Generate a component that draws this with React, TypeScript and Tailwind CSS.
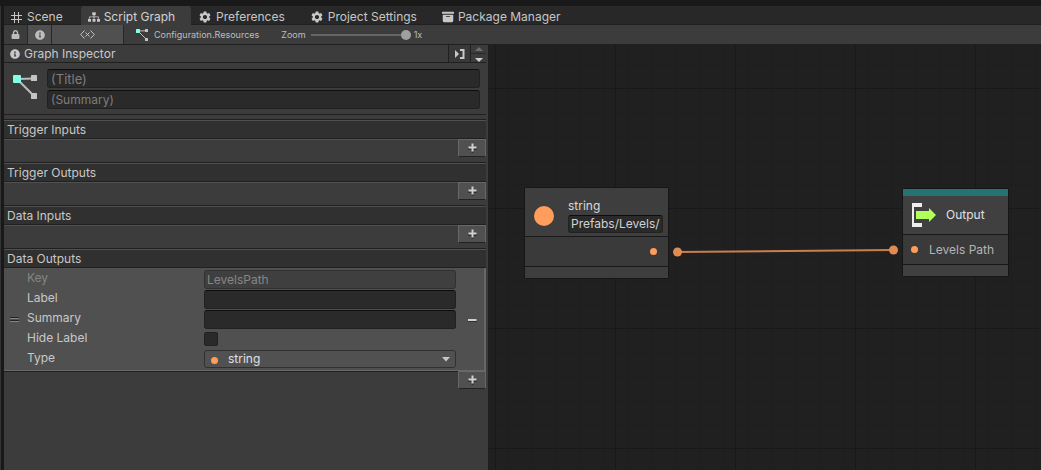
import { useState } from "react";
import type { ReactNode } from "react";
import { BsArchiveFill } from "react-icons/bs";
import { FaInfoCircle, FaLock, FaSitemap } from "react-icons/fa";
import { MdSettings } from "react-icons/md";

const fieldClass =
  "block h-[19px] w-full min-w-0 rounded-[3px] border border-[#212121] border-t-[#0d0d0d] bg-[#2a2a2a] px-[3px] text-[12px] leading-4 text-[#d2d2d2] outline-none placeholder:text-[#7d7d7d]";

function HashIcon() {
  return (
    <svg width="12" height="11" viewBox="0 0 12 11" stroke="#c8c8c8" fill="none" aria-hidden="true">
      <path d="M3.5 0V11M7.5 0V11M0 3.5H11M0 7.5H11" />
    </svg>
  );
}

function GraphIcon({ size }: { size: number }) {
  return (
    <svg width={size} height={size} viewBox="0 0 24 24" aria-hidden="true">
      <path d="M4 4L21 3.500M4 4L21 21" stroke="#bdbdbd" strokeWidth="2" />
      <rect x="0" y="0" width="8" height="8" rx="1" fill="#7fffe6" />
      <rect x="18" y="0" width="6" height="6" rx="0.500" fill="#c4c4c4" />
      <rect x="18" y="18" width="6" height="6" rx="0.500" fill="#c4c4c4" />
    </svg>
  );
}

function VariablesIcon() {
  return (
    <svg width="15" height="9" viewBox="0 0 15 9" fill="none" stroke="#c4c4c4" aria-hidden="true">
      <path d="M4.500 0.500L0.700 4.500L4.500 8.500M10.500 0.500L14.300 4.500L10.500 8.500M5.500 2.500L9.500 6.500M9.500 2.500L5.500 6.500" />
    </svg>
  );
}

function DockIcon() {
  return (
    <svg width="10" height="10" viewBox="0 0 10 10" aria-hidden="true">
      <path d="M0 1L4 5L0 9Z" fill="#c8c8c8" />
      <path d="M5 1H8.500V9H5" fill="none" stroke="#c8c8c8" strokeWidth="2" />
    </svg>
  );
}

function PlusIcon() {
  return (
    <svg width="9" height="10" viewBox="0 0 9 10" fill="none" strokeWidth="2" aria-hidden="true">
      <path d="M4.500 2V10M0 6H9" stroke="#303030" />
      <path d="M4.500 0.500V8.500M0.500 4.500H8.500" stroke="#d0d0d0" />
    </svg>
  );
}

function OutputIcon() {
  return (
    <svg width="24" height="24" viewBox="0 0 24 24" aria-hidden="true">
      <path d="M10 0H0V24H10V20H2V4H10Z" fill="#eeeeee" />
      <path d="M4 8H17V5L24 12L17 19V16H4Z" fill="#b2ff59" />
    </svg>
  );
}

function Tab({ icon, label, active = false }: { icon: ReactNode; label: string; active?: boolean }) {
  return (
    <button
      type="button"
      role="tab"
      aria-selected={active}
      className={
        active
          ? "flex items-center gap-1 rounded-t-[3px] bg-[#3c3c3c] pt-[3px] pr-4 pl-[7px] text-[#d2d2d2]"
          : "flex items-center gap-1 border-b border-[#202020] pt-1 pr-[18px] pl-[7px] text-[#c6c6c6]"
      }
    >
      {icon}
      <span className="whitespace-nowrap">{label}</span>
    </button>
  );
}

function AddButton({ label }: { label: string }) {
  return (
    <button
      type="button"
      aria-label={label}
      className="flex h-[18px] w-7 items-center justify-center border border-[#686868] border-b-[#222] bg-[#505050]"
    >
      <PlusIcon />
    </button>
  );
}

function Section({ title, children }: { title: string; children?: ReactNode }) {
  return (
    <section className="group">
      <h2 className="h-[19px] border-t border-b border-t-[#505050] border-b-[#202020] bg-[#303030] px-[3px] leading-[17px]">
        {title}
      </h2>
      {children}
      <div className="flex h-6 items-start justify-end border-b border-[#202020] group-last:border-transparent">
        <div className={children ? "h-px flex-1 bg-[#202020]" : "h-px flex-1 bg-[#505050]"} />
        <AddButton label={`Add to ${title}`} />
      </div>
    </section>
  );
}

function Row({ id, label, dim = false, children }: { id: string; label: string; dim?: boolean; children: ReactNode }) {
  return (
    <div className="flex h-5 items-start">
      <label htmlFor={id} className={dim ? "w-[177px] shrink-0 leading-4 text-[#868686]" : "w-[177px] shrink-0 leading-4"}>
        {label}
      </label>
      <div className="min-w-0 flex-1">{children}</div>
    </div>
  );
}

function Inspector() {
  const [hidden, setHidden] = useState(false);
  return (
    <aside className="flex w-[484px] shrink-0 flex-col border-r-2 border-[#3c3c3c] bg-[#3c3c3c] text-[#c8c8c8]">
      <header className="flex h-[18px] border-b border-[#202020]">
        <h1 className="flex flex-1 items-center gap-1 border-r border-[#202020] pl-1.5">
          <FaInfoCircle size={10} />
          Graph Inspector
        </h1>
        <button type="button" aria-label="Dock panel" className="flex w-[21px] items-center justify-center bg-[#383838]">
          <DockIcon />
        </button>
        <div className="flex w-4 flex-col border-l border-[#202020]">
          <button type="button" aria-label="Move up" className="flex flex-1 items-center justify-center border-b border-[#282828]">
            <svg width="8" height="4" viewBox="0 0 8 4" aria-hidden="true">
              <path d="M0 4L4 0L8 4Z" fill="#6e6e6e" />
            </svg>
          </button>
          <button type="button" aria-label="Move down" className="flex flex-1 items-end justify-center">
            <svg width="8" height="4" viewBox="0 0 8 4" aria-hidden="true">
              <path d="M0 0L4 4L8 0Z" fill="#d0d0d0" />
            </svg>
          </button>
        </div>
      </header>

      <div className="flex gap-2.5 border-b border-[#202020] pt-1.5 pr-[6px] pb-[5px] pl-[9px]">
        <div className="pt-1.5">
          <GraphIcon size={24} />
        </div>
        <div className="flex min-w-0 flex-1 flex-col gap-0.5">
          <input aria-label="Title" placeholder="(Title)" className={`${fieldClass} text-[13px]`} />
          <input aria-label="Summary" placeholder="(Summary)" className={fieldClass} />
        </div>
      </div>
      <div className="h-[5px] border-b border-[#202020]" />

      <Section title="Trigger Inputs" />
      <Section title="Trigger Outputs" />
      <Section title="Data Inputs" />
      <Section title="Data Outputs">
        <div className="flex border-r-2 border-b border-[#686868] bg-[#505050] pt-0.5">
          <div className="flex w-[23px] items-center pl-1.5">
            <svg width="9" height="6" viewBox="0 0 9 6" aria-hidden="true">
              <path d="M0 0.500H9M0 3.500H9" stroke="#222" />
              <path d="M0 1.500H9M0 4.500H9" stroke="#858585" />
            </svg>
          </div>
          <div className="min-w-0 flex-1">
            <Row id="key" label="Key" dim>
              <input
                id="key"
                disabled
                defaultValue="LevelsPath"
                className="block h-[19px] w-full rounded-[3px] border border-[#303030] bg-[#3f3f3f] px-0.5 text-[12px] leading-4 text-[#868686]"
              />
            </Row>
            <Row id="label" label="Label">
              <input id="label" className={fieldClass} />
            </Row>
            <Row id="summary" label="Summary">
              <input id="summary" className={fieldClass} />
            </Row>
            <Row id="hide" label="Hide Label">
              <input
                id="hide"
                type="checkbox"
                checked={hidden}
                onChange={(e) => setHidden(e.target.checked)}
                className="mt-0.5 block size-3.5 appearance-none rounded-[2px] border border-[#212121] bg-[#2a2a2a] checked:bg-[#c8c8c8]"
              />
            </Row>
            <Row id="type" label="Type">
              <div className="relative">
                <select
                  id="type"
                  className="block h-[18px] w-full appearance-none rounded-[3px] border border-[#303030] bg-[#515151] pl-[23px] text-[12px] leading-4 text-[#e0e0e0]"
                >
                  <option>string</option>
                </select>
                <span className="pointer-events-none absolute top-[7px] left-[7px] size-[7px] rounded-full bg-[#ff9d5c]" />
                <svg className="pointer-events-none absolute top-[7px] right-[6px]" width="8" height="5" viewBox="0 0 8 5" aria-hidden="true">
                  <path d="M0 0L4 4.500L8 0Z" fill="#c8c8c8" />
                </svg>
              </div>
            </Row>
          </div>
          <button type="button" aria-label="Remove item" className="flex w-7 items-center justify-center pl-1">
            <svg width="9" height="3" viewBox="0 0 9 3" aria-hidden="true">
              <path d="M0 1H8.500" stroke="#d0d0d0" strokeWidth="2" />
              <path d="M0 2.500H9" stroke="#303030" />
            </svg>
          </button>
        </div>
      </Section>
    </aside>
  );
}

function Canvas() {
  return (
    <main className="relative min-w-0 flex-1 overflow-hidden bg-[#202020]">
      <svg className="absolute inset-0 size-full" aria-hidden="true">
        <defs>
          <pattern id="minor" width="24" height="24" x="19" y="19" patternUnits="userSpaceOnUse">
            <path d="M0.500 0V24M0 0.500H24" stroke="#1e1e1e" fill="none" />
          </pattern>
          <pattern id="major" width="120" height="120" x="7" y="43" patternUnits="userSpaceOnUse">
            <path d="M0.500 0V120M0 0.500H120" stroke="#191919" fill="none" />
          </pattern>
        </defs>
        <rect width="100%" height="100%" fill="url(#minor)" />
        <rect width="100%" height="100%" fill="url(#major)" />
        <path d="M189 207L405 205" stroke="#c87f4c" strokeWidth="2" />
        <circle cx="189.500" cy="207" r="4.500" fill="#e08b52" />
        <circle cx="405.500" cy="205" r="4.500" fill="#e08b52" />
      </svg>

      <article className="absolute top-[142px] left-9 w-[145px] rounded-[2px] border border-[#161616] bg-[#3a3a3a]">
        <div className="flex h-[49px] items-center gap-3.5 border-b border-[#191919] bg-[#3e3e3e] pr-[5px] pl-[9px]">
          <span className="mt-2 size-5 shrink-0 rounded-full bg-[#ff9d5c]" />
          <div className="flex min-w-0 flex-1 flex-col gap-px pt-1.5">
            <label htmlFor="literal" className="leading-4 text-[#d8d8d8]">
              string
            </label>
            <input
              id="literal"
              defaultValue="Prefabs/Levels/"
              className="block h-[18px] w-full rounded-[3px] border border-[#222] border-t-[#0d0d0d] bg-[#2a2a2a] px-0.5 text-[12px] leading-4 text-[#d2d2d2]"
            />
          </div>
        </div>
        <div className="flex h-[30px] items-center justify-end border-b border-[#191919] pr-[11px]">
          <span className="size-[7px] rounded-full bg-[#ff9d5c]" />
        </div>
        <div className="h-[11px] bg-[#3e3e3e]" />
      </article>

      <article className="absolute top-[143px] left-[414px] w-[107px] rounded-[2px] border border-[#161616] bg-[#3a3a3a]">
        <div className="h-[7px] bg-[#267373]" />
        <div className="flex h-[39px] items-center gap-2.5 border-b border-[#191919] bg-[#404040] pl-[9px]">
          <OutputIcon />
          <h2 className="text-[#e0e0e0]">Output</h2>
        </div>
        <div className="flex h-[30px] items-center gap-[11px] border-b border-[#191919] pl-2">
          <span className="size-[7px] rounded-full bg-[#ff9d5c]" />
          <span className="whitespace-nowrap text-[#b4b4b4]">Levels Path</span>
        </div>
        <div className="h-[11px] bg-[#404040]" />
      </article>
    </main>
  );
}

export default function App() {
  return (
    <div className="flex min-h-screen flex-col bg-[#191919] pt-1.5 font-['Inter',sans-serif] text-[12px] leading-4">
      <div className="flex flex-1 flex-col border-l border-[#333]">
        <div className="flex flex-1 flex-col border-l-3 border-[#191919]">
          <nav role="tablist" className="flex h-[19px] bg-[#282828]">
            <Tab icon={<HashIcon />} label="Scene" />
            <Tab icon={<FaSitemap size={12} color="#c8c8c8" />} label="Script Graph" active />
            <Tab icon={<MdSettings size={14} color="#c8c8c8" />} label="Preferences" />
            <Tab icon={<MdSettings size={14} color="#c8c8c8" />} label="Project Settings" />
            <Tab icon={<BsArchiveFill size={12} color="#c8c8c8" />} label="Package Manager" />
            <div className="flex-1 border-b border-[#202020]" />
          </nav>

          <div className="flex h-5 items-stretch border-b border-[#202020] bg-[#3c3c3c] text-[9px] text-[#bdbdbd]">
            <button type="button" aria-label="Lock" className="flex w-6 items-center justify-center border-r border-[#282828]">
              <FaLock size={9} />
            </button>
            <button type="button" aria-label="Graph inspector" className="flex w-6 items-center justify-center border-r border-[#282828] bg-[#505050]">
              <FaInfoCircle size={10} />
            </button>
            <button type="button" aria-label="Variables" className="flex w-[72px] items-center justify-center border-r border-[#282828] bg-[#505050]">
              <VariablesIcon />
            </button>
            <a href="#graph" className="flex items-center gap-1.5 pl-3">
              <GraphIcon size={12} />
              Configuration.Resources
            </a>
            <label htmlFor="zoom" className="flex items-center pr-[5px] pl-[22px]">
              Zoom
            </label>
            <input
              id="zoom"
              type="range"
              min="0"
              max="1"
              step="0.01"
              defaultValue="1"
              className="my-auto h-2.5 w-[100px] appearance-none bg-transparent [&::-webkit-slider-runnable-track]:h-0.5 [&::-webkit-slider-runnable-track]:bg-[#666] [&::-webkit-slider-thumb]:-mt-1 [&::-webkit-slider-thumb]:size-2.5 [&::-webkit-slider-thumb]:appearance-none [&::-webkit-slider-thumb]:rounded-full [&::-webkit-slider-thumb]:bg-[#a0a0a0]"
            />
            <output htmlFor="zoom" className="flex items-center pl-[3px]">
              1x
            </output>
          </div>

          <div className="flex flex-1">
            <Inspector />
            <Canvas />
          </div>
        </div>
      </div>
    </div>
  );
}
